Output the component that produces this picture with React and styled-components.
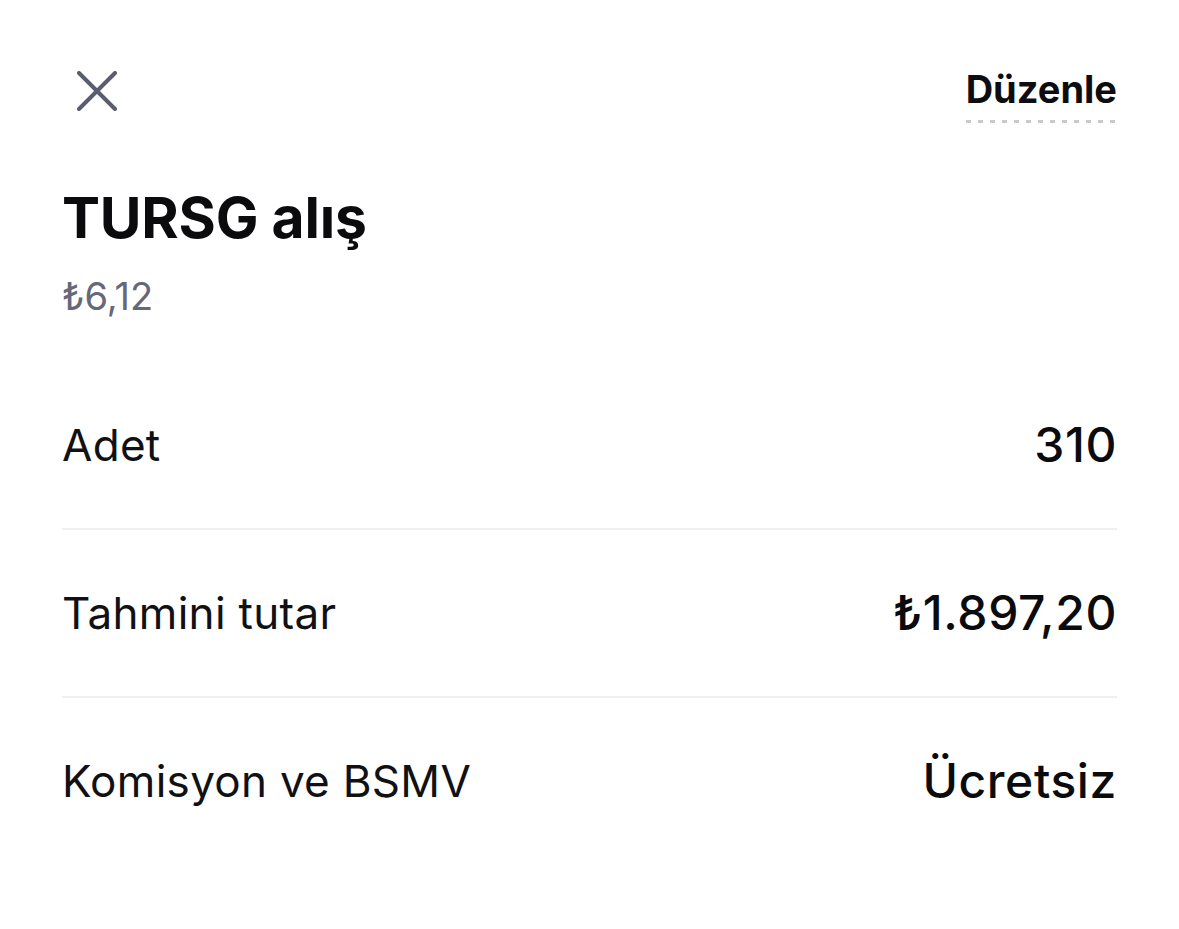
import React from 'react';
import styled, { createGlobalStyle } from 'styled-components';

const GlobalStyle = createGlobalStyle`
  html, body {
    margin: 0;
    padding: 0;
    background: #ffffff;
  }
  body {
    font-family: 'Inter', 'Noto Sans', sans-serif;
    color: #111114;
    -webkit-font-smoothing: antialiased;
  }
`;

const Sheet = styled.div`
  width: 1179px;
  min-height: 929px;
  box-sizing: border-box;
  padding: 60px 62px 0 62px;
  background: #fff;
`;

const Header = styled.div`
  display: flex;
  justify-content: space-between;
  align-items: center;
  height: 62px;
`;

const CloseButton = styled.button`
  display: flex;
  align-items: center;
  justify-content: flex-start;
  width: 68px;
  height: 62px;
  padding: 0 0 0 15px;
  border: none;
  background: none;
  cursor: pointer;
`;

const EditLink = styled.a`
  font-size: 38px;
  font-weight: 700;
  letter-spacing: 0;
  color: #0d0d10;
  text-decoration: none;
  line-height: 1.2;
  padding-bottom: 10px;
  margin-top: 8px;
  background-image: repeating-linear-gradient(
    to right,
    #c9cad1 0,
    #c9cad1 5px,
    transparent 5px,
    transparent 12px
  );
  background-size: 100% 3px;
  background-repeat: no-repeat;
  background-position: 0 100%;
`;

const Title = styled.h1`
  margin: 62px 0 0;
  font-size: 57px;
  font-weight: 700;
  line-height: 1.2;
  letter-spacing: -0.2px;
  color: #0b0b0e;
`;

const Price = styled.div`
  margin-top: 22px;
  font-size: 38px;
  font-weight: 400;
  line-height: 1.2;
  color: #666879;
`;

const List = styled.div`
  margin-top: 42px;
`;

const Row = styled.div`
  display: flex;
  justify-content: space-between;
  align-items: center;
  height: 166px;
  border-bottom: ${({ $last }) => ($last ? 'none' : '2px solid #efeff1')};
`;

const Label = styled.span`
  font-size: 44px;
  font-weight: 400;
  line-height: 1.2;
  letter-spacing: 0.3px;
  color: #111114;
`;

const Value = styled.span`
  font-size: 48px;
  font-weight: 500;
  line-height: 1.2;
  letter-spacing: 0.6px;
  color: #0b0b0e;
`;

const CloseIcon = () => (
  <svg width="40" height="40" viewBox="0 0 40 40" fill="none">
    <path
      d="M2 2 L38 38 M38 2 L2 38"
      stroke="#5a5c72"
      strokeWidth="4"
      strokeLinecap="round"
    />
  </svg>
);

const details = [
  { label: 'Adet', value: '310' },
  { label: 'Tahmini tutar', value: '₺1.897,20' },
  { label: 'Komisyon ve BSMV', value: 'Ücretsiz' },
];

export default function App() {
  return (
    <>
      <GlobalStyle />
      <Sheet>
        <Header>
          <CloseButton aria-label="Kapat">
            <CloseIcon />
          </CloseButton>
          <EditLink href="#">Düzenle</EditLink>
        </Header>
        <Title>TURSG alış</Title>
        <Price>₺6,12</Price>
        <List>
          {details.map((d, i) => (
            <Row key={d.label} $last={i === details.length - 1}>
              <Label>{d.label}</Label>
              <Value>{d.value}</Value>
            </Row>
          ))}
        </List>
      </Sheet>
    </>
  );
}
